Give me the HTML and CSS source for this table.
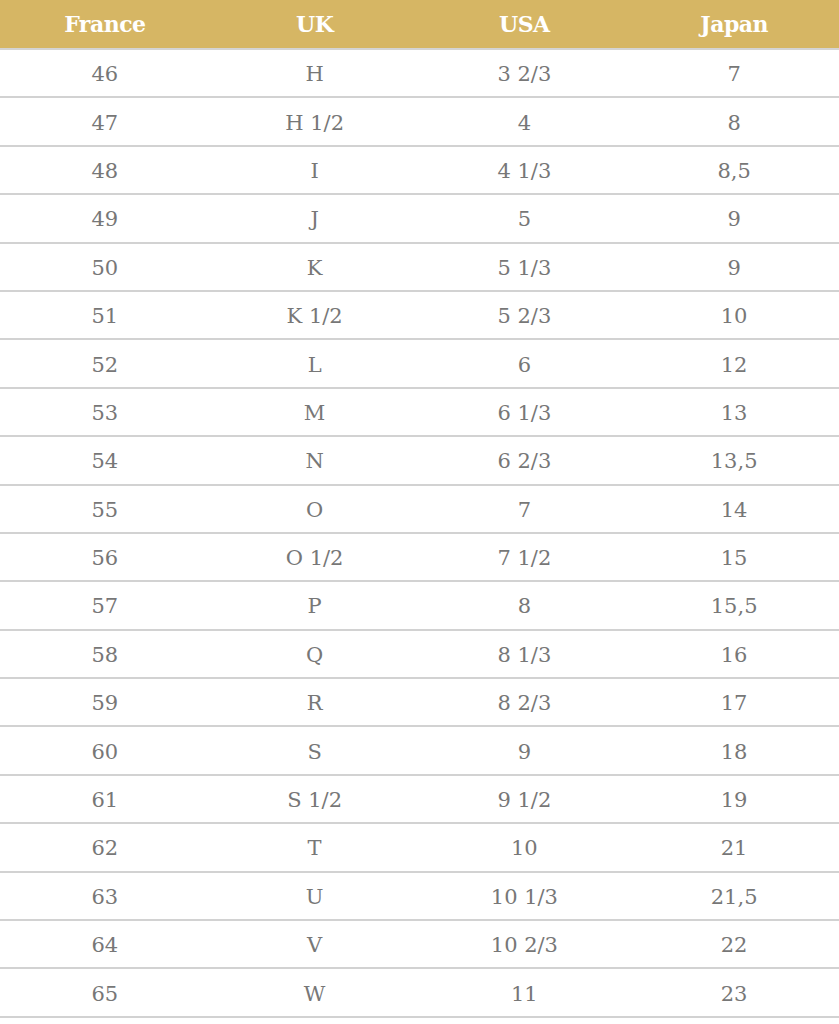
FILE: index.html
```html
<!DOCTYPE html>
<html>
<head>
<meta charset="utf-8">
<link rel="stylesheet" href="styles.css">
</head>
<body>
<table class="size-table">
  <thead>
    <tr><th>France</th><th>UK</th><th>USA</th><th>Japan</th></tr>
  </thead>
  <tbody>
    <tr><td>46</td><td>H</td><td>3 2/3</td><td>7</td></tr>
    <tr><td>47</td><td>H 1/2</td><td>4</td><td>8</td></tr>
    <tr><td>48</td><td>I</td><td>4 1/3</td><td>8,5</td></tr>
    <tr><td>49</td><td>J</td><td>5</td><td>9</td></tr>
    <tr><td>50</td><td>K</td><td>5 1/3</td><td>9</td></tr>
    <tr><td>51</td><td>K 1/2</td><td>5 2/3</td><td>10</td></tr>
    <tr><td>52</td><td>L</td><td>6</td><td>12</td></tr>
    <tr><td>53</td><td>M</td><td>6 1/3</td><td>13</td></tr>
    <tr><td>54</td><td>N</td><td>6 2/3</td><td>13,5</td></tr>
    <tr><td>55</td><td>O</td><td>7</td><td>14</td></tr>
    <tr><td>56</td><td>O 1/2</td><td>7 1/2</td><td>15</td></tr>
    <tr><td>57</td><td>P</td><td>8</td><td>15,5</td></tr>
    <tr><td>58</td><td>Q</td><td>8 1/3</td><td>16</td></tr>
    <tr><td>59</td><td>R</td><td>8 2/3</td><td>17</td></tr>
    <tr><td>60</td><td>S</td><td>9</td><td>18</td></tr>
    <tr><td>61</td><td>S 1/2</td><td>9 1/2</td><td>19</td></tr>
    <tr><td>62</td><td>T</td><td>10</td><td>21</td></tr>
    <tr><td>63</td><td>U</td><td>10 1/3</td><td>21,5</td></tr>
    <tr><td>64</td><td>V</td><td>10 2/3</td><td>22</td></tr>
    <tr><td>65</td><td>W</td><td>11</td><td>23</td></tr>
  </tbody>
</table>
</body>
</html>
```

FILE: styles.css
```css
html, body {
  margin: 0;
  padding: 0;
  background: #ffffff;
}

.size-table {
  width: 839px;
  border-collapse: collapse;
  table-layout: fixed;
  font-family: "DejaVu Serif", "Liberation Serif", serif;
}

.size-table th {
  background: #d6b664;
  color: #ffffff;
  font-weight: bold;
  font-size: 22px;
  letter-spacing: -0.5px;
  height: 48px;
  padding: 0;
  text-align: center;
  vertical-align: middle;
  border-bottom: 2px solid #d4d4d4;
}

.size-table td {
  color: #777777;
  font-size: 21px;
  height: 44.4px;
  padding: 2px 0 0 0;
  text-align: center;
  vertical-align: middle;
  border-bottom: 2px solid #d2d2d2;
}
```
